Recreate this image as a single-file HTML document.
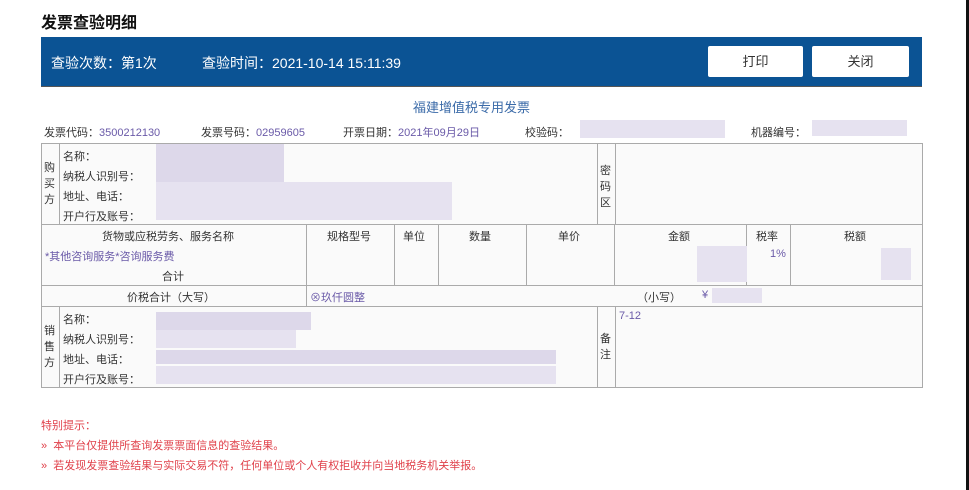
<!DOCTYPE html>
<html><head><meta charset="utf-8"><style>
*{margin:0;padding:0;box-sizing:border-box}
body{width:969px;height:490px;background:#fff;position:relative;overflow:hidden;font-family:"Liberation Sans","Noto Sans CJK SC",sans-serif;font-size:11px;color:#333}
.a{position:absolute;white-space:nowrap}
.p{color:#6a5aa8}
.t{background:#fafafa;position:absolute;left:41px;top:143px;width:882px;height:245px;border:1px solid #aaa}
.h{position:absolute;background:#aaa;height:1px}
.v{position:absolute;background:#aaa;width:1px}
.b{position:absolute;background:#d6d0e6}
.b2{position:absolute;background:#e6e2f0}
.btn{position:absolute;top:46px;height:31px;background:#fff;border-radius:2px;font-size:13px;color:#333;text-align:center;line-height:31px}
.r{color:#e0404a}
</style></head><body>
<div class="a" style="left:41px;top:9px;font-size:16px;font-weight:bold;color:#111">发票查验明细</div>
<div class="a" style="left:41px;top:37px;width:881px;height:50px;background:#0b5394;border-bottom:1px solid #555"></div>
<div class="a" style="left:51px;top:53px;color:#fff;font-size:14px">查验次数：第1次</div>
<div class="a" style="left:202px;top:53px;color:#fff;font-size:14px">查验时间：2021-10-14 15:11:39</div>
<div class="btn" style="left:708px;width:95px">打印</div>
<div class="btn" style="left:812px;width:97px">关闭</div>
<div style="position:absolute;right:0;top:0;width:3px;height:490px;background:#111"></div>

<div class="a" style="left:413px;top:97px;font-size:13px;color:#3a6aa8">福建增值税专用发票</div>
<div class="a" style="left:44px;top:124px">发票代码：<span class="p">3500212130</span></div>
<div class="a" style="left:201px;top:124px">发票号码：<span class="p">02959605</span></div>
<div class="a" style="left:343px;top:124px">开票日期：<span class="p">2021年09月29日</span></div>
<div class="a" style="left:525px;top:124px">校验码：</div>
<div class="b2" style="left:580px;top:120px;width:145px;height:18px"></div>
<div class="a" style="left:751px;top:124px">机器编号：</div>
<div class="b2" style="left:812px;top:120px;width:95px;height:16px"></div>

<div class="t"></div>
<div class="h" style="left:41px;top:224px;width:882px"></div>
<div class="h" style="left:41px;top:285px;width:882px"></div>
<div class="h" style="left:41px;top:306px;width:882px"></div>
<div class="v" style="left:59px;top:143px;height:81px"></div>
<div class="v" style="left:59px;top:306px;height:82px"></div>
<div class="v" style="left:597px;top:143px;height:81px"></div>
<div class="v" style="left:615px;top:143px;height:81px"></div>
<div class="v" style="left:597px;top:306px;height:82px"></div>
<div class="v" style="left:615px;top:306px;height:82px"></div>
<div class="v" style="left:306px;top:224px;height:82px"></div>
<div class="v" style="left:394px;top:224px;height:61px"></div>
<div class="v" style="left:438px;top:224px;height:61px"></div>
<div class="v" style="left:526px;top:224px;height:61px"></div>
<div class="v" style="left:614px;top:224px;height:61px"></div>
<div class="v" style="left:746px;top:224px;height:61px"></div>
<div class="v" style="left:790px;top:224px;height:61px"></div>

<div class="a" style="left:44px;top:160px;line-height:16px">购<br>买<br>方</div>
<div class="a" style="left:63px;top:147px;line-height:20px">名称：<br>纳税人识别号：<br>地址、电话：<br>开户行及账号：</div>
<div class="b" style="left:156px;top:144px;width:128px;height:40px;opacity:.8"></div>
<div class="b2" style="left:156px;top:182px;width:296px;height:38px"></div>
<div class="a" style="left:600px;top:163px;line-height:16px">密<br>码<br>区</div>

<div class="a" style="left:102px;top:228px">货物或应税劳务、服务名称</div>
<div class="a p" style="left:45px;top:248px">*其他咨询服务*咨询服务费</div>
<div class="a" style="left:162px;top:268px">合计</div>
<div class="a" style="left:327px;top:228px">规格型号</div>
<div class="a" style="left:403px;top:228px">单位</div>
<div class="a" style="left:469px;top:228px">数量</div>
<div class="a" style="left:558px;top:228px">单价</div>
<div class="a" style="left:668px;top:228px">金额</div>
<div class="a" style="left:756px;top:228px">税率</div>
<div class="a" style="left:844px;top:228px">税额</div>
<div class="a p" style="left:770px;top:248px">1%</div>
<div class="b2" style="left:697px;top:246px;width:50px;height:36px"></div>
<div class="b2" style="left:881px;top:248px;width:30px;height:32px"></div>

<div class="a" style="left:127px;top:289px">价税合计（大写）</div>
<div class="a p" style="left:310px;top:289px">⊗玖仟圆整</div>
<div class="a" style="left:637px;top:289px">（小写）</div>
<div class="a p" style="left:702px;top:289px">¥</div>
<div class="b2" style="left:712px;top:288px;width:50px;height:15px"></div>

<div class="a" style="left:44px;top:323px;line-height:16px">销<br>售<br>方</div>
<div class="a" style="left:63px;top:310px;line-height:20px">名称：<br>纳税人识别号：<br>地址、电话：<br>开户行及账号：</div>
<div class="b" style="left:156px;top:312px;width:155px;height:18px;opacity:.8"></div>
<div class="b2" style="left:156px;top:330px;width:140px;height:18px"></div>
<div class="b" style="left:156px;top:350px;width:400px;height:14px;opacity:.8"></div>
<div class="b2" style="left:156px;top:366px;width:400px;height:18px"></div>
<div class="a" style="left:600px;top:331px;line-height:16px">备<br>注</div>
<div class="a p" style="left:619px;top:310px">7-12</div>

<div class="a r" style="left:41px;top:417px">特别提示：</div>
<div class="a r" style="left:41px;top:437px">»&nbsp; 本平台仅提供所查询发票票面信息的查验结果。</div>
<div class="a r" style="left:41px;top:457px">»&nbsp; 若发现发票查验结果与实际交易不符，任何单位或个人有权拒收并向当地税务机关举报。</div>
</body></html>
